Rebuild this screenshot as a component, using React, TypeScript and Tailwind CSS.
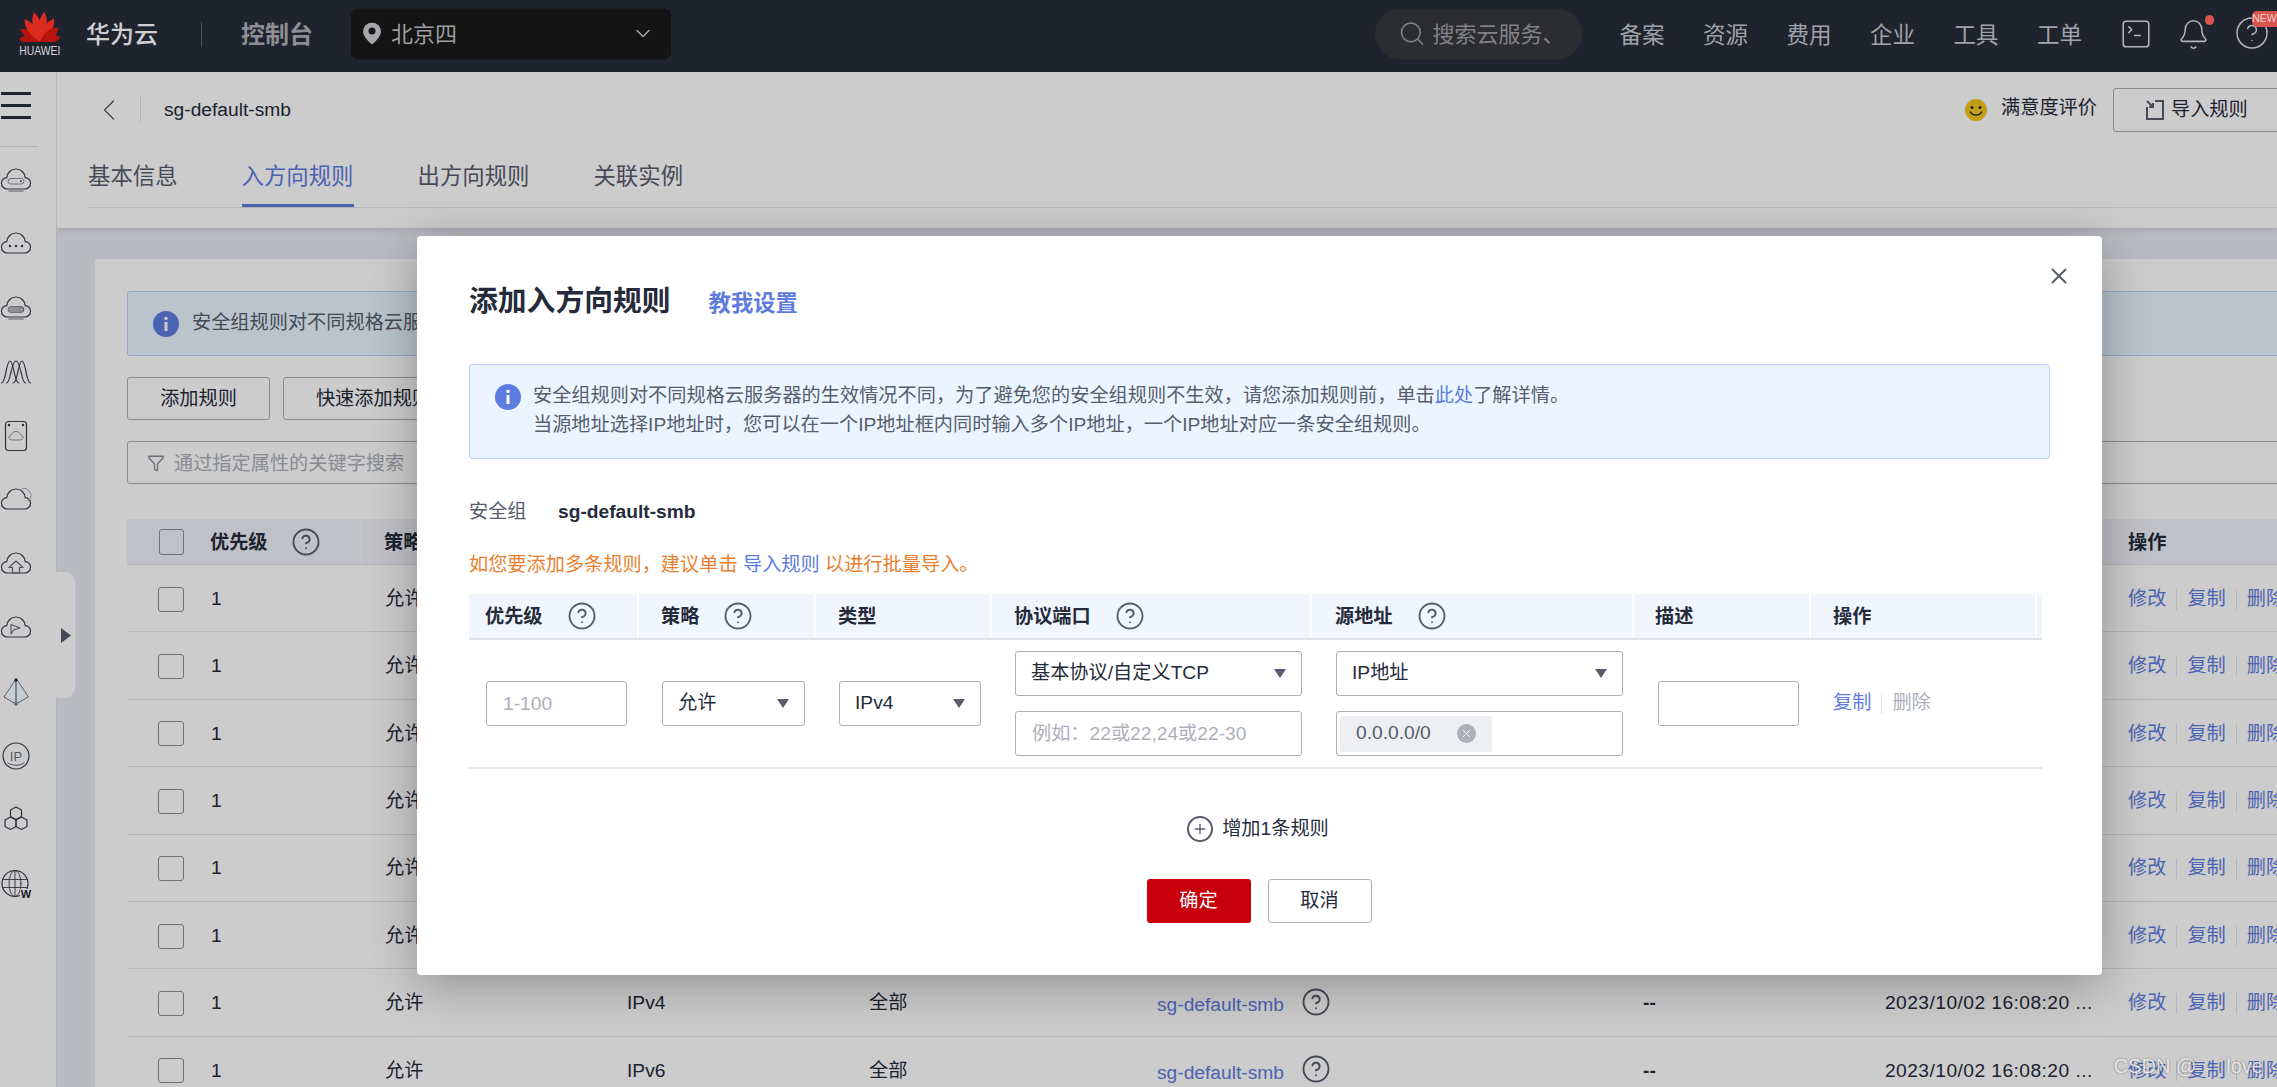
import { Bell, CircleHelp, ChevronDown, ChevronLeft, Search, SquareTerminal, Filter, X, Plus } from "lucide-react";

const CLOUD = "M7.5 25C3.8 25 1.5 22.3 1.5 19.2C1.5 16 3.9 13.8 6.8 13.6C7.2 8.8 11 5 16 5C21 5 24.8 8.8 25.2 13.6C28.1 13.8 30.5 16 30.5 19.2C30.5 22.3 28.2 25 24.5 25Z";
const STROKE = "#3b4050";

function SideIcon({ children }: { children: React.ReactNode }) {
  return (
    <div className="flex h-[64px] w-[32px] items-center justify-center">
      <svg width="32" height="32" viewBox="0 0 32 32" fill="none" stroke={STROKE} strokeWidth="1.2" strokeLinecap="round" strokeLinejoin="round">
        {children}
      </svg>
    </div>
  );
}

const sideIcons = [
  <>
    <path d={CLOUD} />
    <rect x="8" y="14.5" width="16" height="5.5" rx="2.7" stroke="#8a8e99" strokeWidth="1" />
    <circle cx="21" cy="17.2" r="0.9" fill={STROKE} stroke="none" />
    <path d="M9 27h14" stroke="#a3a6ae" strokeWidth="1.500" />
  </>,
  <>
    <path d={CLOUD} />
    <circle cx="10" cy="18" r="1.3" fill={STROKE} stroke="none" />
    <circle cx="16" cy="18" r="1.3" fill={STROKE} stroke="none" />
    <circle cx="22" cy="18" r="1.3" fill={STROKE} stroke="none" />
  </>,
  <>
    <path d={CLOUD} />
    <rect x="8" y="14.5" width="16" height="6" rx="3" fill="#b3b5bc" stroke="#8a8e99" strokeWidth="1" />
    <circle cx="21.500" cy="17.500" r="1.800" fill="#e3e4e8" stroke="#6c707c" strokeWidth="0.800" />
    <path d="M9 27h14" stroke="#a3a6ae" strokeWidth="1.500" />
  </>,
  <>
    <path d="M1.5 27C6 27 6 5 10 5C14 5 14 27 19 27" />
    <path d="M6.5 27C11 27 11 5 16 5C21 5 21 27 25.5 27" />
    <path d="M13 27C18 27 18 5 22 5C26 5 26 27 30.5 27" />
  </>,
  <>
    <rect x="5.5" y="1.5" width="21" height="29" rx="3" />
    <circle cx="9" cy="5" r="0.7" fill={STROKE} />
    <circle cx="23" cy="5" r="0.7" fill={STROKE} />
    <path d="M12 20c-1.800 0-3-1.200-3-2.700s1.200-2.600 2.700-2.700c.4-1.900 2.200-3.100 4.300-3.100s3.800 1.300 4.200 3.100c1.600.1 2.800 1.200 2.800 2.700s-1.200 2.700-3 2.700z" stroke="#8a8e99" strokeWidth="1" />
  </>,
  <>
    <path d={CLOUD} />
    <path d="M21 5.500C23 3.500 27 4 28.800 7C30.800 8.500 31.500 11 31 13C30.500 15 29.500 16 28 16.500" stroke="#a3a6ae" strokeWidth="1" />
  </>,
  <>
    <path d={CLOUD} />
    <path d="M16 13L23 19.500H19.500V25H12.500V19.500H9Z" stroke="#5f6472" strokeWidth="1.100" />
  </>,
  <>
    <path d={CLOUD} />
    <path d="M11 12.500L20 16L13.500 18L11 22Z" stroke="#5f6472" strokeWidth="1.100" />
  </>,
  <>
    <path d="M16 3L4 21L16 28L28 21Z" strokeWidth="1" stroke="#6c707c" />
    <path d="M16 3V28" stroke="#3a6ea8" />
    <circle cx="16" cy="4" r="1.600" fill="#23262f" stroke="none" />
    <circle cx="16" cy="28" r="1.200" fill="#cbcbcb" stroke="#6c707c" />
  </>,
  <>
    <circle cx="16" cy="16" r="13" />
    <text x="16" y="20.500" textAnchor="middle" fontSize="13" fill="#6c707c" stroke="none">IP</text>
    <path d="M8 23c4 3 12 3 16 0" strokeWidth="0.800" />
  </>,
  <>
    <path d="M16 3L21.500 6V12.500L16 15.500L10.500 12.500V6Z" />
    <path d="M10.500 13L16 16V22.500L10.500 25.500L5 22.500V16Z" />
    <path d="M21.500 13L27 16V22.500L21.500 25.500L16 22.500V16Z" />
  </>,
  <>
    <circle cx="15" cy="15.500" r="13" />
    <ellipse cx="15" cy="15.500" rx="6" ry="13" strokeWidth="0.900" />
    <path d="M2.500 11.500h25M2.500 19.500h25M15 2.500v26" strokeWidth="0.900" />
    <rect x="20" y="21" width="12" height="10" fill="#ffffff" stroke="none" />
    <text x="26" y="30" textAnchor="middle" fontSize="11" fontWeight="700" fill="#23262f" stroke="none">W</text>
  </>,
];

const PETALS = [
  { a: -80, l: 21 },
  { a: -56, l: 23 },
  { a: -33, l: 27 },
  { a: -10, l: 30 },
  { a: 10, l: 30 },
  { a: 33, l: 27 },
  { a: 56, l: 23 },
  { a: 80, l: 21 },
];

function HuaweiLogo() {
  return (
    <div className="ml-[19px] flex w-[42px] -translate-y-[2px] flex-col items-center">
      <svg width="42" height="30" viewBox="0 0 42 30">
        {PETALS.map((p) => (
          <path
            key={p.a}
            transform={`translate(21 29.5) rotate(${p.a})`}
            d={`M0 0C-5.500 ${-p.l * 0.35} -5.800 ${-p.l * 0.75} -0.800 ${-p.l}C5 ${-p.l * 0.75} 5.500 ${-p.l * 0.35} 0 0Z`}
            fill={Math.abs(p.a) < 40 ? "#dc2c20" : "#b5140f"}
          />
        ))}
      </svg>
      <span className="mt-[3px] scale-x-[0.8] text-[13px] leading-[12px] whitespace-nowrap text-[#d4d4d6]">HUAWEI</span>
    </div>
  );
}

function TopBar() {
  return (
    <header className="relative z-10 flex h-[72px] items-center bg-[#1f232d] pr-[7px]">
      <HuaweiLogo />
      <span className="ml-[25px] -translate-y-[1px] text-[24px] font-medium whitespace-nowrap text-[#cfcfd1]">华为云</span>
      <div className="ml-[43px] h-[25px] w-px -translate-y-[2px] bg-[#4a4d55]" />
      <span className="ml-[39px] -translate-y-[1px] text-[24px] font-bold whitespace-nowrap text-[#8d8f94]">控制台</span>
      <div className="ml-[38px] flex h-[51px] w-[320px] -translate-y-[2.500px] items-center rounded-[7px] bg-[#141414] pl-[12px] pr-[16px]">
        <svg width="18" height="22" viewBox="0 0 18 22">
          <path d="M9 0a9 9 0 0 0-9 9c0 6 9 13 9 13s9-7 9-13a9 9 0 0 0-9-9z" fill="#a5a7aa" />
          <circle cx="9" cy="8.500" r="3.500" fill="#141414" />
        </svg>
        <span className="ml-[10px] text-[22px] text-[#9d9ea1]">北京四</span>
        <ChevronDown size={24} strokeWidth={1.500} className="ml-auto text-[#a5a7aa]" />
      </div>
      <div className="ml-auto flex h-[51px] w-[207px] -translate-y-[2.500px] items-center overflow-hidden rounded-[26px] bg-[#2c2d31] pl-[23px]">
        <Search size={28} strokeWidth={1.300} className="shrink-0 text-[#85878b]" />
        <span className="ml-[7px] text-[22px] whitespace-nowrap text-[#818286]">搜索云服务、</span>
      </div>
      <nav className="ml-[38px] flex gap-[38.500px]">
        {["备案", "资源", "费用", "企业", "工具", "工单"].map((t) => (
          <span key={t} className="w-[45px] text-[22.500px] whitespace-nowrap text-[#a0a2a7]">{t}</span>
        ))}
      </nav>
      <SquareTerminal size={34} strokeWidth={1.100} className="ml-[37px] -translate-y-[2px] text-[#b3b5ba]" />
      <div className="relative ml-[24px] -translate-y-[2px]">
        <Bell size={33} strokeWidth={1.100} className="text-[#b3b5ba]" />
        <span className="absolute -top-[3px] -right-[4px] h-[10px] w-[9px] rounded-full bg-[#d9534f]" />
      </div>
      <div className="relative ml-[24px] -translate-y-[3px]">
        <CircleHelp size={36} strokeWidth={1} className="text-[#b3b5ba]" />
        <span className="absolute -top-[4px] -right-[7px] flex h-[16px] w-[25px] items-center justify-center rounded-l-[5px] bg-[#d9534f] text-[10.500px] text-[#f1d5d4]">NEW</span>
      </div>
    </header>
  );
}

function SideBar() {
  return (
    <aside className="flex w-[57px] shrink-0 flex-col border-r border-[#dfe1e6] bg-white">
      <div className="flex h-[74px] flex-col gap-[9px] pt-[20px] pl-px">
        <div className="h-[3px] w-[30px] bg-[#252b3a]" />
        <div className="h-[3px] w-[30px] bg-[#252b3a]" />
        <div className="h-[3px] w-[30px] bg-[#252b3a]" />
      </div>
      <div className="h-px w-[38px] bg-[#dfe1e6]" />
      <div className="mt-px flex flex-col">
        {sideIcons.map((icon, i) => (
          <SideIcon key={i}>{icon}</SideIcon>
        ))}
      </div>
    </aside>
  );
}

function SubHeader() {
  return (
    <div className="relative h-[156px] bg-white shadow-[0_2px_6px_rgba(0,0,0,0.12)]">
      <div className="flex h-[44px] translate-y-[16px] items-center pl-[34px]">
        <ChevronLeft size={36} strokeWidth={0.900} className="text-[#575d6c]" />
        <div className="ml-[13px] h-[26px] w-px bg-[#dfe1e6]" />
        <span className="ml-[23px] text-[19.200px] text-[#252b3a]">sg-default-smb</span>
        <svg width="24" height="24" viewBox="0 0 24 24" className="ml-auto">
          <circle cx="12" cy="12" r="11" fill="#f4c51c" />
          <circle cx="8" cy="9.500" r="1.500" fill="#252b3a" />
          <circle cx="16" cy="9.500" r="1.500" fill="#252b3a" />
          <path d="M6.500 14c1.500 4 9.500 4 11 0" stroke="#252b3a" strokeWidth="1.400" fill="none" strokeLinecap="round" />
        </svg>
        <span className="ml-[13px] -translate-y-[2px] text-[19.200px] whitespace-nowrap text-[#252b3a]">满意度评价</span>
        <div className="-mr-[30px] ml-[16px] flex h-[44px] w-[194px] items-center rounded-[3px] border border-[#adb0b8] pl-[31px]">
          <svg width="20" height="22" viewBox="0 0 20 22" fill="none" stroke="#575d6c" strokeWidth="2">
            <path d="M2 8V20H18V2H10M2 2L8 8M8 4V8H4" />
          </svg>
          <span className="ml-[6px] text-[19.200px] whitespace-nowrap text-[#252b3a]">导入规则</span>
        </div>
      </div>
      <div className="mt-[46px] ml-[31px] flex gap-[64px] border-b border-[#dfe1e6] text-[22.400px] leading-[30px] text-[#575d6c]">
        <span className="pb-[15px]">基本信息</span>
        <span className="relative pb-[15px] text-[#5e7ce0]">
          入方向规则
          <span className="absolute right-0 bottom-0 left-0 h-[3px] bg-[#5e7ce0]" />
        </span>
        <span className="pb-[15px]">出方向规则</span>
        <span className="pb-[15px]">关联实例</span>
      </div>
    </div>
  );
}

function Help({ className = "" }: { className?: string }) {
  return <CircleHelp size={30} strokeWidth={1.500} className={`shrink-0 text-[#575d6c] ${className}`} />;
}

const ROW_COLS = "grid grid-cols-[234px_243px_242px_288px_486px_242px_243px_1fr] items-center";

function Ops() {
  return (
    <div className="flex items-center pl-[23px] text-[#5e7ce0]">
      <span>修改</span>
      <span className="mx-[10px] h-[21px] w-px bg-[#dfe1e6]" />
      <span>复制</span>
      <span className="mx-[10px] h-[21px] w-px bg-[#dfe1e6]" />
      <span>删除</span>
    </div>
  );
}

const rows = ["IPv4", "IPv4", "IPv4", "IPv4", "IPv4", "IPv4", "IPv4", "IPv6"];

function BackgroundPage() {
  return (
    <div className="w-[2300px] bg-white pt-[32px] pl-[32px]">
      <div className="flex h-[65px] items-center rounded-[3px] border border-[#bdd0ff] bg-[#e8f5ff] pl-[25px]">
        <InfoIcon />
        <span className="ml-[13px] text-[19.200px] whitespace-nowrap text-[#575d6c]">安全组规则对不同规格云服务器的生效情况不同</span>
      </div>
      <div className="mt-[21px] flex gap-[13px] text-[19.200px] text-[#252b3a]">
        <div className="flex h-[43px] w-[143px] items-center justify-center rounded-[3px] border border-[#adb0b8] pt-[2px]">添加规则</div>
        <div className="flex h-[43px] w-[181px] items-center justify-center rounded-[3px] border border-[#adb0b8] pt-[2px]">快速添加规则</div>
      </div>
      <div className="mt-[21px] flex h-[43px] items-center rounded-[3px] border border-[#adb0b8] pl-[19px] text-[19.200px] text-[#adb0b8]">
        <Filter size={18} strokeWidth={1.800} className="text-[#8a8e99]" />
        <span className="ml-[9px] translate-y-[2px]">通过指定属性的关键字搜索</span>
      </div>
      <div className="mt-[35px] text-[19.200px] text-[#252b3a]">
        <div className={`${ROW_COLS} h-[46px] border-b border-[#e3e4e8] bg-[#f0f2f8] font-bold`}>
          <div className="flex h-full items-center border-r border-[#f8f9fb] pl-[32px]">
            <div className="h-[26px] w-[25px] rounded-[3px] border border-[#8a8e99]" />
            <span className="ml-[26px] translate-y-[2px]">优先级</span>
            <Help className="ml-[23px]" />
          </div>
          <div className="translate-y-[2px] pl-[23px]">策略</div>
          <div className="translate-y-[2px] pl-[23px]">类型</div>
          <div className="translate-y-[2px] pl-[23px]">协议端口</div>
          <div className="translate-y-[2px] pl-[23px]">源地址</div>
          <div className="translate-y-[2px] pl-[23px]">描述</div>
          <div className="translate-y-[2px] pl-[23px]">创建时间</div>
          <div className="flex h-full items-center border-l border-[#f8f9fb] pl-[22px]">
            <span className="translate-y-[2px]">操作</span>
          </div>
        </div>
        {rows.map((type, i) => (
          <div key={i} className={`${ROW_COLS} h-[67.400px] border-b border-[#e3e4e8] pt-[2px]`}>
            <div className="flex items-center pl-[31px]">
              <div className="h-[25px] w-[26px] rounded-[3px] border border-[#8a8e99]" />
              <span className="ml-[27px]">1</span>
            </div>
            <div className="pl-[24px]">允许</div>
            <div className="pl-[23px]">{type}</div>
            <div className="pl-[23px]">全部</div>
            <div className="flex items-center pl-[23px] text-[#5e7ce0]">
              <span className="translate-y-[2px]">sg-default-smb</span>
              <Help className="-mt-[3px] ml-[17px]" />
            </div>
            <div className="pl-[23px] font-bold">--</div>
            <div className="pl-[23px] tracking-[0.450px] whitespace-nowrap">2023/10/02 16:08:20 ...</div>
            <Ops />
          </div>
        ))}
      </div>
    </div>
  );
}

function InfoIcon() {
  return (
    <svg width="26" height="26" viewBox="0 0 26 26" className="shrink-0">
      <circle cx="13" cy="13" r="13" fill="#5e7ce0" />
      <circle cx="13" cy="7.500" r="1.800" fill="#fff" />
      <rect x="11.500" y="11" width="3" height="9" fill="#fff" />
    </svg>
  );
}

function Caret() {
  return (
    <svg width="12" height="9" viewBox="0 0 12 9" className="ml-auto shrink-0">
      <path d="M0 0H12L6 9Z" fill="#575d6c" />
    </svg>
  );
}

function Select({ label, className = "" }: { label: string; className?: string }) {
  return (
    <div className={`flex h-[45px] items-center rounded-[3px] border border-[#adb0b8] pr-[15px] pl-[15px] ${className}`}>
      <span className="whitespace-nowrap">{label}</span>
      <Caret />
    </div>
  );
}

function Field({ placeholder, className = "" }: { placeholder?: string; className?: string }) {
  return (
    <input
      readOnly
      placeholder={placeholder}
      className={`h-[45px] rounded-[3px] border border-[#adb0b8] px-[16px] outline-none placeholder:text-[#adb0b8] ${className}`}
    />
  );
}

const RULE_COLS = "grid grid-cols-[170px_177px_176px_320px_322px_177px_226px_6px]";

function RuleTable() {
  return (
    <div className="mt-[14px] w-[1573px] text-[19.200px] text-[#252b3a]">
      <div className={`${RULE_COLS} h-[46px] border-b-2 border-[#dfe1e6] bg-[#f1f5fd] font-bold`}>
        <div className="flex items-center border-r-2 border-white pl-[16px]"><span className="translate-y-[1px]">优先级</span><Help className="ml-[24px]" /></div>
        <div className="flex items-center border-r-2 border-white pl-[22px]"><span className="translate-y-[1px]">策略</span><Help className="ml-[24px]" /></div>
        <div className="flex items-center border-r-2 border-white pl-[22px]"><span className="translate-y-[1px]">类型</span></div>
        <div className="flex items-center border-r-2 border-white pl-[22px]"><span className="translate-y-[1px]">协议端口</span><Help className="ml-[24px]" /></div>
        <div className="flex items-center border-r-2 border-white pl-[23px]"><span className="translate-y-[1px]">源地址</span><Help className="ml-[24px]" /></div>
        <div className="flex items-center border-r-2 border-white pl-[21px]"><span className="translate-y-[1px]">描述</span></div>
        <div className="flex items-center border-r-2 border-white pl-[22px]"><span className="translate-y-[1px]">操作</span></div>
        <div />
      </div>
      <div className={`${RULE_COLS} h-[129px] items-center border-b-2 border-[#e6e8ee]`}>
        <div className="pl-[17px]"><Field placeholder="1-100" className="w-[141px]" /></div>
        <div className="pl-[23px]"><Select label="允许" className="w-[143px]" /></div>
        <div className="pl-[23px]"><Select label="IPv4" className="w-[142px]" /></div>
        <div className="flex flex-col gap-[15px] pl-[23px]">
          <Select label="基本协议/自定义TCP" className="w-[287px]" />
          <Field placeholder="例如：22或22,24或22-30" className="w-[287px]" />
        </div>
        <div className="flex flex-col gap-[15px] pl-[24px]">
          <Select label="IP地址" className="w-[287px]" />
          <div className="flex h-[45px] w-[287px] items-center rounded-[3px] border border-[#adb0b8] pl-[3px]">
            <div className="flex h-[36px] w-[152px] items-center rounded-[3px] bg-[#eeeff3] pl-[16px]">
              <span className="text-[#575d6c]">0.0.0.0/0</span>
              <span className="ml-[26px] flex h-[19px] w-[19px] items-center justify-center rounded-full bg-[#adb0b8]">
                <X size={13} strokeWidth={1.500} className="text-white" />
              </span>
            </div>
          </div>
        </div>
        <div className="pl-[24px]"><Field className="w-[141px]" /></div>
        <div className="flex items-center pl-[22px]">
          <span className="text-[#5e7ce0]">复制</span>
          <span className="mx-[10px] h-[21px] w-px bg-[#dfe1e6]" />
          <span className="text-[#adb0b8]">删除</span>
        </div>
        <div />
      </div>
    </div>
  );
}

function Dialog() {
  return (
    <div className="absolute top-[236px] left-[417px] z-20 h-[739px] w-[1685px] rounded-[4px] bg-white px-[52px] pt-[44px] shadow-[0_10px_50px_rgba(0,0,0,0.3)]">
      <X size={26} strokeWidth={1.800} className="absolute top-[27px] right-[30px] text-[#575d6c]" />
      <div className="flex h-[42px] items-center">
        <h2 className="translate-y-[1px] text-[28.800px] font-bold text-[#252b3a]">添加入方向规则</h2>
        <span className="ml-[38px] translate-y-[3px] text-[22.300px] font-bold text-[#5e7ce0]">教我设置</span>
      </div>
      <div className="mt-[42px] flex h-[95px] w-[1581px] rounded-[3px] border border-[#bdd0ff] bg-[#eaf5ff] pt-[16px] pl-[25px] text-[19.200px] leading-[29px] text-[#575d6c]">
        <div className="pt-[3px]"><InfoIcon /></div>
        <div className="ml-[12px]">
          <p>安全组规则对不同规格云服务器的生效情况不同，为了避免您的安全组规则不生效，请您添加规则前，单击<span className="text-[#5e7ce0]">此处</span>了解详情。</p>
          <p>当源地址选择IP地址时，您可以在一个IP地址框内同时输入多个IP地址，一个IP地址对应一条安全组规则。</p>
        </div>
      </div>
      <div className="mt-[38px] flex h-[30px] items-center text-[19.200px]">
        <span className="w-[89px] text-[#575d6c]">安全组</span>
        <span className="font-bold text-[#252b3a]">sg-default-smb</span>
      </div>
      <p className="mt-[23px] h-[30px] text-[19.200px] leading-[30px] text-[#e97f2e]">
        如您要添加多条规则，建议单击 <span className="text-[#5e7ce0]">导入规则</span> 以进行批量导入。
      </p>
      <RuleTable />
      <div className="mt-[45px] flex h-[30px] items-center justify-center pr-[3px] text-[19.200px] text-[#252b3a]">
        <span className="flex h-[26px] w-[26px] items-center justify-center rounded-full border-[2px] border-[#575d6c]">
          <Plus size={16} strokeWidth={2} className="text-[#575d6c]" />
        </span>
        <span className="ml-[9px]">增加1条规则</span>
      </div>
      <div className="mt-[35px] flex justify-center gap-[17px] pr-[1px] text-[19.200px]">
        <button className="h-[44px] w-[104px] rounded-[3px] bg-[#c7000b] text-white">确定</button>
        <button className="h-[44px] w-[104px] rounded-[3px] border border-[#adb0b8] text-[#252b3a]">取消</button>
      </div>
    </div>
  );
}

export default function App() {
  return (
    <div className="relative h-[1087px] w-[2277px] overflow-hidden font-['Liberation_Sans','Noto_Sans_CJK_SC',sans-serif]">
      <TopBar />
      <div className="flex h-[1015px]">
        <SideBar />
        <main className="min-w-0 flex-1 overflow-hidden bg-[#e7eaf0]">
          <SubHeader />
          <div className="pt-[31px] pl-[38px]">
            <BackgroundPage />
          </div>
        </main>
      </div>
      <div className="absolute top-[572px] left-[56px] flex h-[126px] w-[19px] items-center justify-center rounded-r-[10px] bg-white">
        <svg width="10" height="15" viewBox="0 0 10 15"><path d="M0 0L10 7.500L0 15Z" fill="#575d6c" /></svg>
      </div>
      {/* dimmed mask under the dialog, the top bar stays out of it */}
      <div className="absolute inset-x-0 top-[72px] bottom-0 bg-black/20" />
      <Dialog />
      <div className="absolute right-[14px] bottom-[6px] z-30 flex text-[20px] whitespace-nowrap text-white/80 [text-shadow:0_0_2px_rgba(0,0,0,0.5)]">
        CSDN @<span className="w-[30px]" />love
      </div>
    </div>
  );
}
